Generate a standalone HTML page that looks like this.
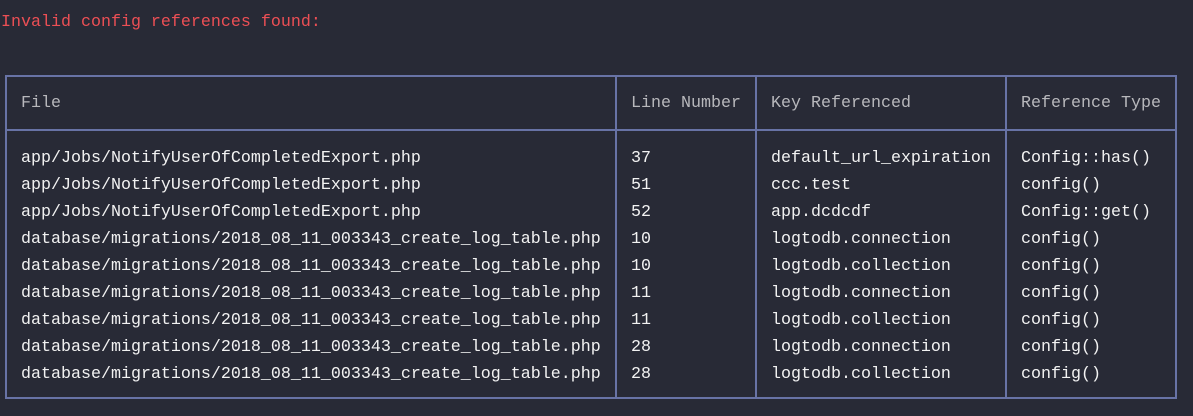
<!DOCTYPE html>
<html><head><style>
html,body{margin:0;padding:0;}
body{width:1193px;height:416px;background:#282a36;position:relative;overflow:hidden;font-family:"Liberation Mono",monospace;font-size:16.67px;}
.t{position:absolute;white-space:pre;line-height:20px;}
.h{color:#b8b8bc;}
.w{color:#f2f2f2;}
.b{position:absolute;background:#6873a6;}
</style></head><body>
<div class="t" style="left:1px;top:13px;color:#ec4f55;">Invalid config references found:</div>
<div class="b" style="left:5px;top:75px;width:1172px;height:2px"></div>
<div class="b" style="left:5px;top:129px;width:1172px;height:2px"></div>
<div class="b" style="left:5px;top:397px;width:1172px;height:2px"></div>
<div class="b" style="left:5px;top:75px;width:2px;height:324px"></div>
<div class="b" style="left:615px;top:75px;width:2px;height:324px"></div>
<div class="b" style="left:755px;top:75px;width:2px;height:324px"></div>
<div class="b" style="left:1005px;top:75px;width:2px;height:324px"></div>
<div class="b" style="left:1175px;top:75px;width:2px;height:324px"></div>
<div class="t h" style="left:21px;top:94px">File</div>
<div class="t h" style="left:631px;top:94px">Line Number</div>
<div class="t h" style="left:771px;top:94px">Key Referenced</div>
<div class="t h" style="left:1021px;top:94px">Reference Type</div>
<div class="t w" style="left:21px;top:145px;line-height:27px">app/Jobs/NotifyUserOfCompletedExport.php
app/Jobs/NotifyUserOfCompletedExport.php
app/Jobs/NotifyUserOfCompletedExport.php
database/migrations/2018_08_11_003343_create_log_table.php
database/migrations/2018_08_11_003343_create_log_table.php
database/migrations/2018_08_11_003343_create_log_table.php
database/migrations/2018_08_11_003343_create_log_table.php
database/migrations/2018_08_11_003343_create_log_table.php
database/migrations/2018_08_11_003343_create_log_table.php</div>
<div class="t w" style="left:631px;top:145px;line-height:27px">37
51
52
10
10
11
11
28
28</div>
<div class="t w" style="left:771px;top:145px;line-height:27px">default_url_expiration
ccc.test
app.dcdcdf
logtodb.connection
logtodb.collection
logtodb.connection
logtodb.collection
logtodb.connection
logtodb.collection</div>
<div class="t w" style="left:1021px;top:145px;line-height:27px">Config::has()
config()
Config::get()
config()
config()
config()
config()
config()
config()</div>
</body></html>
